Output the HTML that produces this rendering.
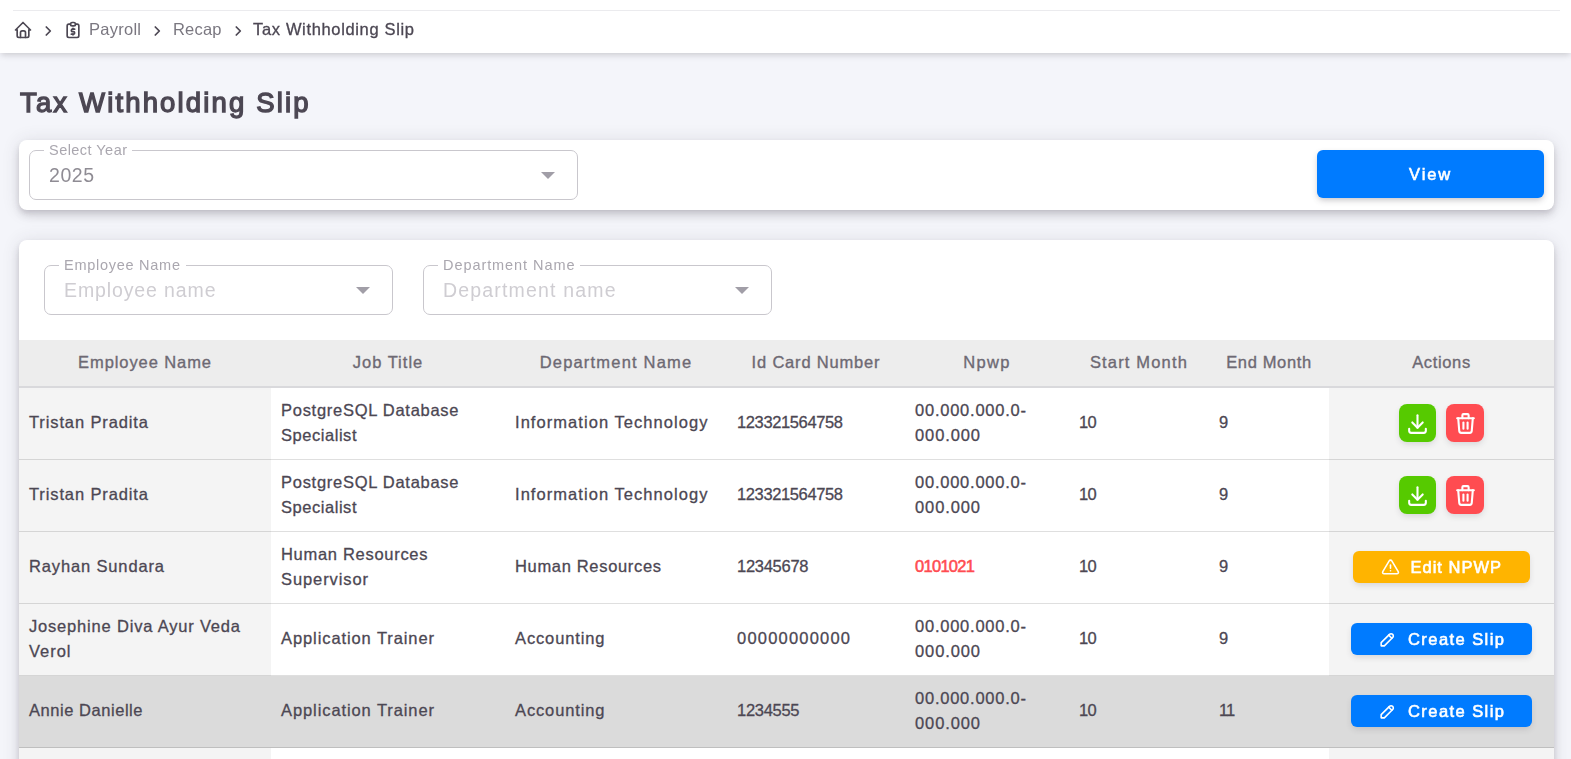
<!DOCTYPE html>
<html lang="en">
<head>
<meta charset="utf-8">
<title>Tax Withholding Slip</title>
<style>
*{box-sizing:border-box;margin:0;padding:0}
html,body{width:1571px;height:759px;overflow:hidden}
body{background:#f4f5fa;-webkit-font-smoothing:antialiased;font-family:"Liberation Sans",sans-serif;color:#4c4753;position:relative}
#app{position:absolute;left:0;top:0;width:1571px;height:759px;overflow:hidden;background:#f4f5fa}
.topbar,h1,#c1,.sel,.tb,.ib{will-change:transform;z-index:2}
.fit{display:inline-block;white-space:nowrap}

/* top bar */
.topbar{position:absolute;left:0;top:0;width:1571px;height:53px;background:#fff;box-shadow:0 3px 6px -1px rgba(58,53,65,.22)}
.topbar .rule{position:absolute;left:13px;top:10px;width:1547px;height:1px;background:#ebebee}
.crumbs{position:absolute;left:0;top:11px;height:42px;width:100%}
.crumbs .it{position:absolute;top:0;height:36px;line-height:36px;font-size:16.5px;color:#7a7780;white-space:nowrap}
.crumbs .cur{color:#4c4753;-webkit-text-stroke:.3px #4c4753}
.crumbs svg{position:absolute}

/* title */
h1{position:absolute;left:20px;top:85px;font-size:27.5px;line-height:36px;font-weight:400;color:#4c4753;white-space:nowrap;-webkit-text-stroke:1.35px #4c4753}

/* cards */
.card{position:absolute;background:#fff;border-radius:8px;box-shadow:0 3px 5px -1px rgba(58,53,65,.15),0 6px 10px 0 rgba(58,53,65,.12),0 1px 18px 0 rgba(58,53,65,.12)}
#c1{left:19px;top:140px;width:1535px;height:70px}
#c2{left:19px;top:240px;width:1535px;height:540px;border-radius:8px 8px 0 0;overflow:hidden}

/* outlined selects */
.sel{position:absolute;height:50px;border:1px solid #c9c7cd;border-radius:7px}
.sel .lab{position:absolute;left:14px;top:-10px;height:18px;line-height:18px;padding:0 5px;background:#fff;font-size:14.5px;color:#aaa7af;white-space:nowrap}
.sel .val{position:absolute;left:19px;top:0;height:48px;line-height:48px;font-size:19.5px;color:#8f8c94;white-space:nowrap}
.sel .ph{color:#cfcdd2}
.sel .arr{position:absolute;right:22px;top:21px;width:0;height:0;border-left:7px solid transparent;border-right:7px solid transparent;border-top:7px solid #a19ea7}

/* buttons */
.btn{position:absolute;display:block;color:#fff;font-weight:400;-webkit-text-stroke:.6px #fff;border-radius:6px;white-space:nowrap;box-shadow:0 3px 6px -1px rgba(58,53,65,.3)}
/* table */
table.grid{position:absolute;left:0;top:100px;width:1535px;border-collapse:separate;border-spacing:0;table-layout:fixed}
.grid th{height:48px;background:#ededed;border-bottom:2px solid #d9d9dc;font-size:16.5px;font-weight:400;color:#6d6973;text-align:center;vertical-align:middle;white-space:nowrap;-webkit-text-stroke:.35px #6d6973}
.grid td{height:72px;padding:0 10px 3px;box-shadow:inset 0 -1px 0 rgba(0,0,0,.125);font-size:16.5px;line-height:24.6px;color:#4c4753;vertical-align:middle;background:#fff;white-space:nowrap;-webkit-text-stroke:.3px #4c4753}
.grid td.stk{background:#f4f4f4}
.grid tr.hov td{background:#dbdbdb}
.grid td.act{padding:0;position:relative}
.grid .red{color:#ff4c51;-webkit-text-stroke:.55px #ff4c51}
.grid .num{letter-spacing:-.6px}
.grid th{padding-bottom:2px}
/* icon buttons */
.ib{position:absolute;top:16px;width:38px;height:38px;border-radius:8px;box-shadow:0 3px 6px -1px rgba(58,53,65,.17)}
.ib svg{position:absolute;left:6.5px;top:6.5px}
.ib.g{background:#56ca00;width:37px}
.ib.g svg{left:6px}
.ib.r{background:#ff4c51}
/* text buttons in table */
.tb{position:absolute;top:19px;height:32px;border-radius:6px;color:#fff;box-shadow:0 3px 6px -1px rgba(58,53,65,.17)}
.tb svg{position:absolute}
.tb .tx{position:absolute;top:0;height:32px;line-height:32px;font-size:16.5px;font-weight:400;white-space:nowrap;-webkit-text-stroke:.6px #fff}
.tb.y{background:#ffb400}
.tb.b{background:#007bff}
.btn-view{left:1317px;top:150px;width:227px;height:48px;background:#007bff;line-height:48px;font-size:16.5px;text-align:center}
</style>
</head>
<body>
<div id="app">

<div class="topbar">
  <div class="rule"></div>
  <nav class="crumbs">
    <!-- home -->
    <svg style="left:13px;top:9px" width="20" height="20" viewBox="0 0 24 24" fill="none" stroke="#4c4753" stroke-width="2" stroke-linecap="round" stroke-linejoin="round"><path d="M5 12H3l9-9 9 9h-2"/><path d="M5 12v7a2 2 0 0 0 2 2h10a2 2 0 0 0 2-2v-7"/><path d="M9 21v-6a2 2 0 0 1 2-2h2a2 2 0 0 1 2 2v6"/></svg>
    <svg class="chev" style="left:44px;top:14px" width="9" height="12" viewBox="0 0 9 12" fill="none" stroke="#4c4753" stroke-width="1.75" stroke-linecap="round" stroke-linejoin="round"><path d="M2.3 2 6.3 6 2.3 10"/></svg>
    <!-- clipboard dollar -->
    <svg style="left:63px;top:9px" width="20" height="20" viewBox="0 0 24 24" fill="none" stroke="#4c4753" stroke-width="2" stroke-linecap="round" stroke-linejoin="round"><path d="M9 5H7a2 2 0 0 0-2 2v12a2 2 0 0 0 2 2h10a2 2 0 0 0 2-2V7a2 2 0 0 0-2-2h-2"/><rect x="9" y="3" width="6" height="4" rx="2"/><path d="M14 11h-2.5a1.5 1.5 0 0 0 0 3h1a1.5 1.5 0 0 1 0 3H10"/><path d="M12 17v1m0-8v1"/></svg>
    <span class="it" style="left:89px"><span class="fit" style="letter-spacing:0.260px">Payroll</span></span>
    <svg class="chev" style="left:153px;top:14px" width="9" height="12" viewBox="0 0 9 12" fill="none" stroke="#4c4753" stroke-width="1.75" stroke-linecap="round" stroke-linejoin="round"><path d="M2.3 2 6.3 6 2.3 10"/></svg>
    <span class="it" style="left:173px"><span class="fit" style="letter-spacing:0.199px">Recap</span></span>
    <svg class="chev" style="left:233.5px;top:14px" width="9" height="12" viewBox="0 0 9 12" fill="none" stroke="#4c4753" stroke-width="1.75" stroke-linecap="round" stroke-linejoin="round"><path d="M2.3 2 6.3 6 2.3 10"/></svg>
    <span class="it cur" style="left:253px"><span class="fit" style="letter-spacing:0.654px">Tax Withholding Slip</span></span>
  </nav>
</div>

<h1><span class="fit" style="letter-spacing:2.151px">Tax Withholding Slip</span></h1>

<section class="card" id="c1">
  <div class="sel" style="left:10px;top:10px;width:549px">
    <span class="lab"><span class="fit" style="letter-spacing:0.463px">Select Year</span></span>
    <span class="val"><span class="fit" style="letter-spacing:0.536px">2025</span></span>
    <i class="arr"></i>
  </div>
  <a class="btn btn-view" style="left:1298px;top:10px"><span class="fit" style="letter-spacing:1.844px">View</span></a>
</section>

<section class="card" id="c2">
  <div class="sel" style="left:25px;top:25px;width:349px">
    <span class="lab"><span class="fit" style="letter-spacing:0.734px">Employee Name</span></span>
    <span class="val ph"><span class="fit" style="letter-spacing:0.882px">Employee name</span></span>
    <i class="arr"></i>
  </div>
  <div class="sel" style="left:404px;top:25px;width:349px">
    <span class="lab"><span class="fit" style="letter-spacing:0.931px">Department Name</span></span>
    <span class="val ph"><span class="fit" style="letter-spacing:1.173px">Department name</span></span>
    <i class="arr"></i>
  </div>

  <table class="grid">
    <colgroup><col style="width:252px"><col style="width:234px"><col style="width:222px"><col style="width:178px"><col style="width:164px"><col style="width:140px"><col style="width:120px"><col style="width:225px"></colgroup>
    <thead>
      <tr>
        <th><span class="fit" style="letter-spacing:0.918px">Employee Name</span></th>
        <th><span class="fit" style="letter-spacing:1.006px">Job Title</span></th>
        <th><span class="fit" style="letter-spacing:1.192px">Department Name</span></th>
        <th><span class="fit" style="letter-spacing:0.816px">Id Card Number</span></th>
        <th><span class="fit" style="letter-spacing:1.271px">Npwp</span></th>
        <th><span class="fit" style="letter-spacing:1.170px">Start Month</span></th>
        <th><span class="fit" style="letter-spacing:0.648px">End Month</span></th>
        <th><span class="fit" style="letter-spacing:0.648px">Actions</span></th>
      </tr>
    </thead>
    <tbody>
      <tr>
        <td class="stk"><span class="fit" style="letter-spacing:0.879px">Tristan Pradita</span></td>
        <td><span class="fit" style="letter-spacing:0.723px">PostgreSQL Database</span><br><span class="fit" style="letter-spacing:0.542px">Specialist</span></td>
        <td><span class="fit" style="letter-spacing:1.057px">Information Technology</span></td>
        <td><span class="fit" style="letter-spacing:-0.375px">123321564758</span></td>
        <td><span class="fit" style="letter-spacing:0.763px">00.000.000.0-</span><br><span class="fit" style="letter-spacing:0.891px">000.000</span></td>
        <td><span class="fit num">10</span></td>
        <td><span class="fit num">9</span></td>
        <td class="stk act"><a class="ib g" style="left:70px"><svg width="25" height="25" viewBox="0 0 24 24" fill="none" stroke="#fff" stroke-width="2" stroke-linecap="round" stroke-linejoin="round"><path d="M4 17v2a2 2 0 0 0 2 2h12a2 2 0 0 0 2-2v-2"/><path d="M7 11l5 5 5-5"/><path d="M12 4v12"/></svg></a><a class="ib r" style="left:117px"><svg width="25" height="25" viewBox="0 0 24 24" fill="none" stroke="#fff" stroke-width="2" stroke-linecap="round" stroke-linejoin="round"><path d="M4 7h16"/><path d="M10 11v6"/><path d="M14 11v6"/><path d="M5 7l1 12a2 2 0 0 0 2 2h8a2 2 0 0 0 2-2l1-12"/><path d="M9 7V4a1 1 0 0 1 1-1h4a1 1 0 0 1 1 1v3"/></svg></a></td>
      </tr>
      <tr>
        <td class="stk"><span class="fit" style="letter-spacing:0.879px">Tristan Pradita</span></td>
        <td><span class="fit" style="letter-spacing:0.723px">PostgreSQL Database</span><br><span class="fit" style="letter-spacing:0.542px">Specialist</span></td>
        <td><span class="fit" style="letter-spacing:1.057px">Information Technology</span></td>
        <td><span class="fit" style="letter-spacing:-0.375px">123321564758</span></td>
        <td><span class="fit" style="letter-spacing:0.763px">00.000.000.0-</span><br><span class="fit" style="letter-spacing:0.891px">000.000</span></td>
        <td><span class="fit num">10</span></td>
        <td><span class="fit num">9</span></td>
        <td class="stk act"><a class="ib g" style="left:70px"><svg width="25" height="25" viewBox="0 0 24 24" fill="none" stroke="#fff" stroke-width="2" stroke-linecap="round" stroke-linejoin="round"><path d="M4 17v2a2 2 0 0 0 2 2h12a2 2 0 0 0 2-2v-2"/><path d="M7 11l5 5 5-5"/><path d="M12 4v12"/></svg></a><a class="ib r" style="left:117px"><svg width="25" height="25" viewBox="0 0 24 24" fill="none" stroke="#fff" stroke-width="2" stroke-linecap="round" stroke-linejoin="round"><path d="M4 7h16"/><path d="M10 11v6"/><path d="M14 11v6"/><path d="M5 7l1 12a2 2 0 0 0 2 2h8a2 2 0 0 0 2-2l1-12"/><path d="M9 7V4a1 1 0 0 1 1-1h4a1 1 0 0 1 1 1v3"/></svg></a></td>
      </tr>
      <tr>
        <td class="stk"><span class="fit" style="letter-spacing:0.858px">Rayhan Sundara</span></td>
        <td><span class="fit" style="letter-spacing:0.704px">Human Resources</span><br><span class="fit" style="letter-spacing:0.903px">Supervisor</span></td>
        <td><span class="fit" style="letter-spacing:0.669px">Human Resources</span></td>
        <td><span class="fit" style="letter-spacing:-0.275px">12345678</span></td>
        <td class="red"><span class="fit" style="letter-spacing:-0.708px">0101021</span></td>
        <td><span class="fit num">10</span></td>
        <td><span class="fit num">9</span></td>
        <td class="stk act"><a class="tb y" style="left:24px;width:177px"><svg style="left:28px;top:7px" width="19" height="19" viewBox="0 0 24 24" fill="none" stroke="#fff" stroke-width="2" stroke-linecap="round" stroke-linejoin="round"><path d="M12 9v4"/><path d="M10.363 3.591L2.257 17.125a1.914 1.914 0 0 0 1.636 2.871h16.214a1.914 1.914 0 0 0 1.636-2.87L13.637 3.59a1.914 1.914 0 0 0-3.274 0z"/><path d="M12 16h.01"/></svg><span class="tx" style="left:57.5px"><span class="fit" style="letter-spacing:0.996px">Edit NPWP</span></span></a></td>
      </tr>
      <tr>
        <td class="stk"><span class="fit" style="letter-spacing:0.812px">Josephine Diva Ayur Veda</span><br><span class="fit" style="letter-spacing:0.973px">Verol</span></td>
        <td><span class="fit" style="letter-spacing:0.907px">Application Trainer</span></td>
        <td><span class="fit" style="letter-spacing:0.873px">Accounting</span></td>
        <td><span class="fit" style="letter-spacing:1.205px">00000000000</span></td>
        <td><span class="fit" style="letter-spacing:0.763px">00.000.000.0-</span><br><span class="fit" style="letter-spacing:0.891px">000.000</span></td>
        <td><span class="fit num">10</span></td>
        <td><span class="fit num">9</span></td>
        <td class="stk act"><a class="tb b" style="left:22px;width:181px"><svg style="left:27.2px;top:7px" width="19" height="19" viewBox="0 0 24 24" fill="none" stroke="#fff" stroke-width="2" stroke-linecap="round" stroke-linejoin="round"><path d="M4 20h4L18.5 9.5a2.828 2.828 0 1 0-4-4L4 16v4"/><path d="M13.5 6.5l4 4"/></svg><span class="tx" style="left:57px"><span class="fit" style="letter-spacing:1.438px">Create Slip</span></span></a></td>
      </tr>
      <tr class="hov">
        <td class="stk"><span class="fit" style="letter-spacing:0.546px">Annie Danielle</span></td>
        <td><span class="fit" style="letter-spacing:0.907px">Application Trainer</span></td>
        <td><span class="fit" style="letter-spacing:0.873px">Accounting</span></td>
        <td><span class="fit" style="letter-spacing:-0.292px">1234555</span></td>
        <td><span class="fit" style="letter-spacing:0.763px">00.000.000.0-</span><br><span class="fit" style="letter-spacing:0.891px">000.000</span></td>
        <td><span class="fit num">10</span></td>
        <td><span class="fit num" style="letter-spacing:-1px">11</span></td>
        <td class="stk act"><a class="tb b" style="left:22px;width:181px"><svg style="left:27.2px;top:7px" width="19" height="19" viewBox="0 0 24 24" fill="none" stroke="#fff" stroke-width="2" stroke-linecap="round" stroke-linejoin="round"><path d="M4 20h4L18.5 9.5a2.828 2.828 0 1 0-4-4L4 16v4"/><path d="M13.5 6.5l4 4"/></svg><span class="tx" style="left:57px"><span class="fit" style="letter-spacing:1.438px">Create Slip</span></span></a></td>
      </tr>
      <tr>
        <td class="stk"><span class="fit">&nbsp;</span></td>
        <td><span class="fit">&nbsp;</span></td>
        <td><span class="fit">&nbsp;</span></td>
        <td><span class="fit">&nbsp;</span></td>
        <td><span class="fit">&nbsp;</span></td>
        <td><span class="fit num"></span></td>
        <td><span class="fit num"></span></td>
        <td class="stk act"></td>
      </tr>
    </tbody>
  </table>
</section>

</div>
</body>
</html>
